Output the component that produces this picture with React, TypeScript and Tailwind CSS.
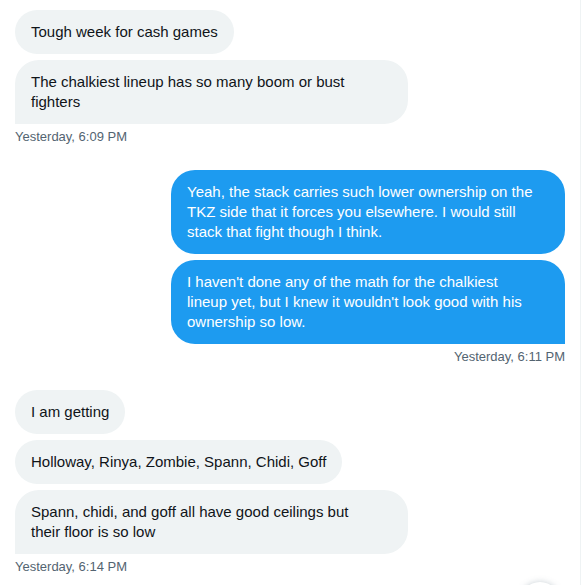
import React from 'react';

type Msg = { text: string; corner?: boolean; full?: boolean };

interface GroupProps {
  mine?: boolean;
  messages: Msg[];
  time: string;
}

const font = { fontFamily: '"Liberation Sans", Arial, sans-serif' };

const MessageGroup: React.FC<GroupProps> = ({ mine = false, messages, time }) => {
  return (
    <div className={`flex flex-col ${mine ? 'items-end' : 'items-start'}`}>
      <div className={`flex flex-col gap-[6px] ${mine ? 'items-end' : 'items-start'}`}>
        {messages.map((m, i) => (
          <div
            key={i}
            className={
              mine
                ? `max-w-[394px] whitespace-pre-line rounded-3xl bg-[#1d9bf0] px-4 py-3 text-[15px] leading-5 text-white ${m.full ? 'w-[394px]' : ''} ${m.corner ? 'rounded-br-none' : ''}`
                : `max-w-[393px] whitespace-pre-line rounded-3xl bg-[#eff3f4] px-4 py-3 text-[15px] leading-5 text-[#0f1419] ${m.full ? 'w-[393px]' : ''} ${m.corner ? 'rounded-bl-none' : ''}`
            }
          >
            {m.text}
          </div>
        ))}
      </div>
      <div className="mt-[5px] text-[13px] leading-4 text-[#536471]">{time}</div>
    </div>
  );
};

export default function App() {
  return (
    <div className="relative h-[585px] w-[581px] overflow-hidden border-r border-[#eff3f4] bg-white" style={font}>
      <div className="flex flex-col gap-[25px] pl-[15px] pr-[15px] pt-[10px]">
        <MessageGroup
          messages={[
            { text: 'Tough week for cash games' },
            { text: 'The chalkiest lineup has so many boom or bust fighters', corner: true },
          ]}
          time="Yesterday, 6:09 PM"
        />
        <MessageGroup
          mine
          messages={[
            {
              text: 'Yeah, the stack carries such lower ownership on the TKZ side that it forces you elsewhere. I would still stack that fight though I think.',
            },
            {
              text: "I haven't done any of the math for the chalkiest\nlineup yet, but I knew it wouldn't look good with his\nownership so low.",
              corner: true,
              full: true,
            },
          ]}
          time="Yesterday, 6:11 PM"
        />
        <MessageGroup
          messages={[
            { text: 'I am getting' },
            { text: 'Holloway, Rinya, Zombie, Spann, Chidi, Goff' },
            {
              text: 'Spann, chidi, and goff all have good ceilings but\ntheir floor is so low',
              corner: true,
              full: true,
            },
          ]}
          time="Yesterday, 6:14 PM"
        />
      </div>
      {/* scroll-down button peeking in */}
      <div className="absolute left-[520px] top-[582px] h-10 w-10 rounded-full bg-white shadow-[0_0_6px_rgba(101,119,134,0.35)]" />
    </div>
  );
}
